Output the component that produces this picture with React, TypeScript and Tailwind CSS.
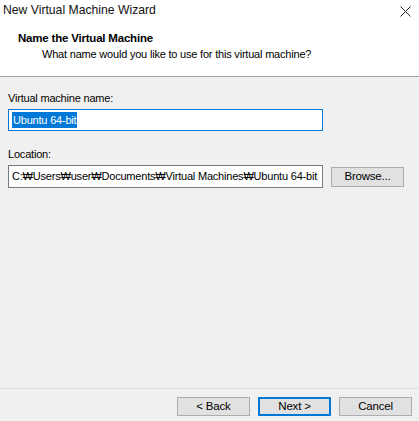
import React from "react";

const font = { fontFamily: '"Liberation Sans", "Noto Sans CJK KR", sans-serif' };

function WinButton({ label, primary }: { label: string; primary?: boolean }) {
  return (
    <button
      className={`h-[19px] w-[73px] text-[11.5px] leading-none tracking-[-0.2px] text-black bg-[#e1e1e1] ${
        primary ? "border-2 border-[#0078d7]" : "border border-[#adadad]"
      }`}
    >
      {label}
    </button>
  );
}

export default function App() {
  return (
    <div className="flex h-[421px] w-[419px] flex-col bg-[#f0f0f0] text-black" style={font}>
      {/* 헤더 (흰 영역) */}
      <div className="h-[77px] border-b border-[#a0a0a0] bg-white">
        <div className="flex h-[21px] items-center justify-between pl-[3px] pr-[8px]">
          <span className="text-[12.2px] text-[#111]">New Virtual Machine Wizard</span>
          <svg width="11" height="11" viewBox="0 0 11 11" className="mt-[1px]">
            <path d="M0.5 0.5 L10.5 10.5 M10.5 0.5 L0.5 10.5" stroke="#222" strokeWidth="1" />
          </svg>
        </div>
        <div className="pl-[18px] pt-[9px] text-[11.5px] font-bold leading-[16px] tracking-[-0.2px]">
          Name the Virtual Machine
        </div>
        <div className="pl-[42px] text-[11px] leading-[16px] tracking-[-0.2px]">
          What name would you like to use for this virtual machine?
        </div>
      </div>

      {/* 본문 */}
      <div className="flex flex-1 flex-col px-[8px] pt-[13px] text-[11px] tracking-[-0.2px]">
        <label className="leading-[16px]">Virtual machine name:</label>
        <div className="mt-[3px] flex h-[22px] w-[315px] items-center border border-[#0078d7] bg-white pl-[3px]">
          <span className="bg-[#0078d7] px-px leading-[16px] text-white">Ubuntu 64-bit</span>
        </div>

        <label className="mt-[15px] leading-[16px]">Location:</label>
        <div className="mt-[3px] flex items-center gap-[8px]">
          <div className="flex h-[23px] w-[315px] items-center overflow-hidden whitespace-nowrap border border-[#7a7a7a] bg-white pl-[3px]">
            C:₩Users₩user₩Documents₩Virtual Machines₩Ubuntu 64-bit
          </div>
          <button className="h-[20px] w-[73px] border border-[#adadad] bg-[#e1e1e1] text-[11.5px] leading-none">
            Browse...
          </button>
        </div>
      </div>

      {/* 하단 버튼 */}
      <div className="h-[33px] border-t border-[#dfdfdf] pt-[8px]">
        <div className="flex justify-end gap-[8px] pr-[7px]">
          <WinButton label="< Back" />
          <WinButton label="Next >" primary />
          <WinButton label="Cancel" />
        </div>
      </div>
    </div>
  );
}
